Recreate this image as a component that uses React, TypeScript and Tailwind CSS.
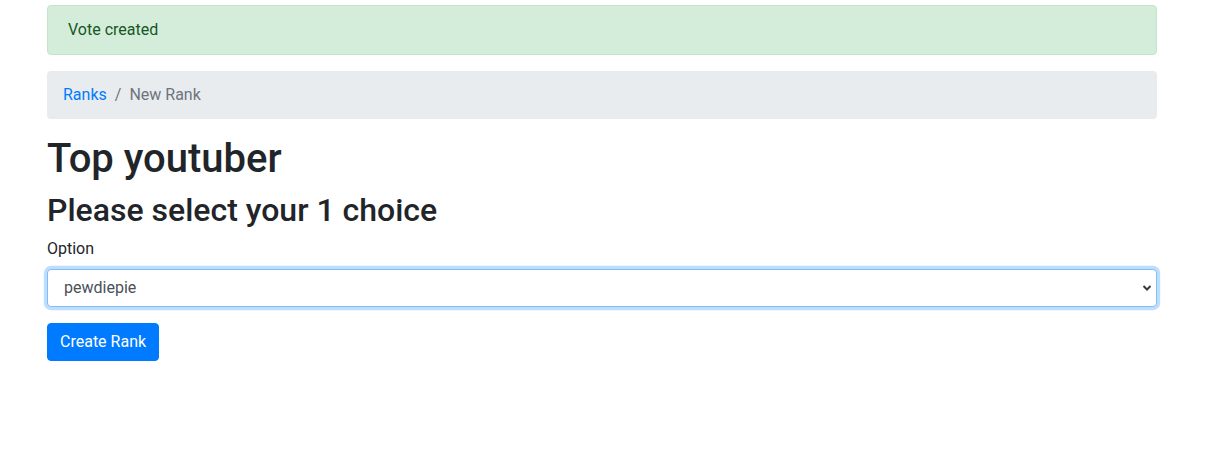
import React from 'react';

const font = { fontFamily: 'Roboto, "Liberation Sans", sans-serif' };

export default function App() {
  return (
    <div className="bg-white min-h-[455px] text-[16px] leading-6 text-[#212529]" style={font}>
      <div className="w-[1110px] ml-[47px] pt-[5px]">
        {/* alert */}
        <div className="mb-4 rounded border border-[#c3e6cb] bg-[#d4edda] px-5 py-3 text-[#155724]">
          Vote created
        </div>

        {/* breadcrumb */}
        <nav className="mb-4 flex rounded bg-[#e9ecef] px-4 py-3">
          <a href="#" className="text-[#007bff]">Ranks</a>
          <span className="px-2 text-[#6c757d]">/</span>
          <span className="text-[#6c757d]">New Rank</span>
        </nav>

        <h1 className="mb-2 text-[40px] font-medium leading-[1.2]">Top youtuber</h1>
        <h2 className="mb-2 text-[32px] font-medium leading-[1.2]">Please select your 1 choice</h2>

        <div className="mb-4">
          <label className="mb-2 inline-block">Option</label>
          <div className="relative">
            <select
              className="block h-[38px] w-full appearance-none rounded border border-[#80bdff] bg-white pl-4 pr-3 py-1.5 text-[#495057] shadow-[0_0_0_3.2px_rgba(0,123,255,0.25)] outline-none"
              style={font}
              defaultValue="pewdiepie"
            >
              <option value="pewdiepie">pewdiepie</option>
            </select>
            <svg className="pointer-events-none absolute right-[5px] top-[15px]" width="10" height="8" viewBox="0 0 10 8">
              <path d="M1.5 2 L5 5.5 L8.5 2" fill="none" stroke="#343a40" strokeWidth="2" />
            </svg>
          </div>
        </div>

        <button className="rounded border border-[#007bff] bg-[#007bff] px-3 py-1.5 text-white" style={font}>
          Create Rank
        </button>
      </div>
    </div>
  );
}
